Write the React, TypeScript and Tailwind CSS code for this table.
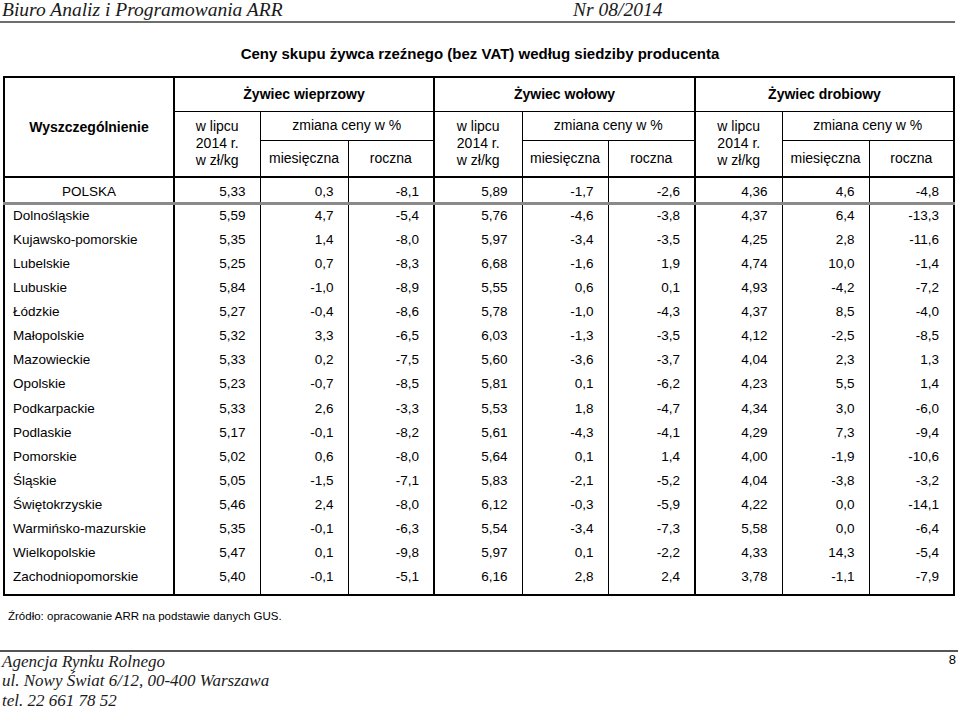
const rows: [string, ...string[]][] = [
  ['Dolnośląskie', '5,59', '4,7', '-5,4', '5,76', '-4,6', '-3,8', '4,37', '6,4', '-13,3'],
  ['Kujawsko-pomorskie', '5,35', '1,4', '-8,0', '5,97', '-3,4', '-3,5', '4,25', '2,8', '-11,6'],
  ['Lubelskie', '5,25', '0,7', '-8,3', '6,68', '-1,6', '1,9', '4,74', '10,0', '-1,4'],
  ['Lubuskie', '5,84', '-1,0', '-8,9', '5,55', '0,6', '0,1', '4,93', '-4,2', '-7,2'],
  ['Łódzkie', '5,27', '-0,4', '-8,6', '5,78', '-1,0', '-4,3', '4,37', '8,5', '-4,0'],
  ['Małopolskie', '5,32', '3,3', '-6,5', '6,03', '-1,3', '-3,5', '4,12', '-2,5', '-8,5'],
  ['Mazowieckie', '5,33', '0,2', '-7,5', '5,60', '-3,6', '-3,7', '4,04', '2,3', '1,3'],
  ['Opolskie', '5,23', '-0,7', '-8,5', '5,81', '0,1', '-6,2', '4,23', '5,5', '1,4'],
  ['Podkarpackie', '5,33', '2,6', '-3,3', '5,53', '1,8', '-4,7', '4,34', '3,0', '-6,0'],
  ['Podlaskie', '5,17', '-0,1', '-8,2', '5,61', '-4,3', '-4,1', '4,29', '7,3', '-9,4'],
  ['Pomorskie', '5,02', '0,6', '-8,0', '5,64', '0,1', '1,4', '4,00', '-1,9', '-10,6'],
  ['Śląskie', '5,05', '-1,5', '-7,1', '5,83', '-2,1', '-5,2', '4,04', '-3,8', '-3,2'],
  ['Świętokrzyskie', '5,46', '2,4', '-8,0', '6,12', '-0,3', '-5,9', '4,22', '0,0', '-14,1'],
  ['Warmińsko-mazurskie', '5,35', '-0,1', '-6,3', '5,54', '-3,4', '-7,3', '5,58', '0,0', '-6,4'],
  ['Wielkopolskie', '5,47', '0,1', '-9,8', '5,97', '0,1', '-2,2', '4,33', '14,3', '-5,4'],
  ['Zachodniopomorskie', '5,40', '-0,1', '-5,1', '6,16', '2,8', '2,4', '3,78', '-1,1', '-7,9'],
];

const polska = ['5,33', '0,3', '-8,1', '5,89', '-1,7', '-2,6', '4,36', '4,6', '-4,8'];
const groups = ['Żywiec wieprzowy', 'Żywiec wołowy', 'Żywiec drobiowy'];

// columns that start a group get the heavy left rule
const numCls = (i: number) =>
  `pr-[14px] text-right border-black ${i % 3 === 0 ? 'border-l-2' : 'border-l'}`;

export default function App() {
  return (
    <div className="w-[960px] h-[706px] overflow-hidden bg-white text-black font-['Liberation_Sans',Arial,sans-serif]">
      <div className="flex items-start h-[23px] w-[955px] border-b-2 border-[#6e6e6e] pl-[2px] font-['Liberation_Serif',serif] italic text-[19.5px] leading-[20px] text-[#1a1a1a]">
        <span className="w-[571px]">Biuro Analiz i Programowania ARR</span>
        <span>Nr 08/2014</span>
      </div>

      <h1 className="mt-[22px] text-center text-[15px] font-bold leading-[18px]">
        Ceny skupu żywca rzeźnego (bez VAT) według siedziby producenta
      </h1>

      <table className="mt-[13px] ml-[3px] w-[951px] table-fixed border-collapse border-2 border-black text-[14px] leading-[17px]">
        <colgroup>
          <col className="w-[170px]" />
          <col className="w-[86px]" />
          <col className="w-[88px]" />
          <col className="w-[86px]" />
          <col className="w-[88px]" />
          <col className="w-[86px]" />
          <col className="w-[87px]" />
          <col className="w-[87px]" />
          <col className="w-[87px]" />
          <col className="w-[85px]" />
        </colgroup>
        <thead>
          <tr>
            <th rowSpan={3} className="font-bold text-center border-b-2 border-black">Wyszczególnienie</th>
            {groups.map((g) => (
              <th key={g} colSpan={3} className="h-[34px] font-bold text-center border-l-2 border-b border-black">{g}</th>
            ))}
          </tr>
          <tr>
            {groups.map((g) => [
              <th key={g + 'a'} rowSpan={2} className="font-normal text-center border-l-2 border-b-2 border-black">
                w lipcu<br />2014 r.<br />w zł/kg
              </th>,
              <th key={g + 'b'} colSpan={2} className="h-[29px] font-normal text-center border-l border-b border-black">zmiana ceny w %</th>,
            ])}
          </tr>
          <tr>
            {groups.map((g) => [
              <th key={g + 'm'} className="h-[37px] font-normal text-center border-l border-b-2 border-black">miesięczna</th>,
              <th key={g + 'r'} className="font-normal text-center border-l border-b-2 border-black">roczna</th>,
            ])}
          </tr>
        </thead>
        <tbody className="text-[13.5px]">
          <tr className="border-b-[3px] border-[#8a8a8a]">
            <td className="h-[26px] pt-[3px] text-center">POLSKA</td>
            {polska.map((v, i) => (
              <td key={i} className={`${numCls(i)} pt-[3px]`}>{v}</td>
            ))}
          </tr>
          {rows.map(([name, ...vals], r) => (
            <tr key={name}>
              <td className={`${r === rows.length - 1 ? 'h-[30px] pb-[6px]' : 'h-[24.13px]'} pl-[8px]`}>{name}</td>
              {vals.map((v, i) => (
                <td key={i} className={`${numCls(i)} ${r === rows.length - 1 ? 'pb-[6px]' : ''}`}>{v}</td>
              ))}
            </tr>
          ))}
        </tbody>
      </table>

      <p className="mt-[13px] pl-[8px] text-[11.5px] leading-[14px]">Źródło: opracowanie ARR na podstawie danych GUS.</p>

      <div className="mt-[27px] w-[958px] border-t-2 border-[#555]">
        <div className="flex justify-between">
          <div className="pl-[2px] font-['Liberation_Serif',serif] italic text-[17px] leading-[19.5px] text-[#1a1a1a]">
            <div>Agencja Rynku Rolnego</div>
            <div>ul. Nowy Świat 6/12, 00-400 Warszawa</div>
            <div>tel. 22 661 78 52</div>
          </div>
          <span className="pr-[2px] text-[13px] leading-[16px]">8</span>
        </div>
      </div>
    </div>
  );
}
